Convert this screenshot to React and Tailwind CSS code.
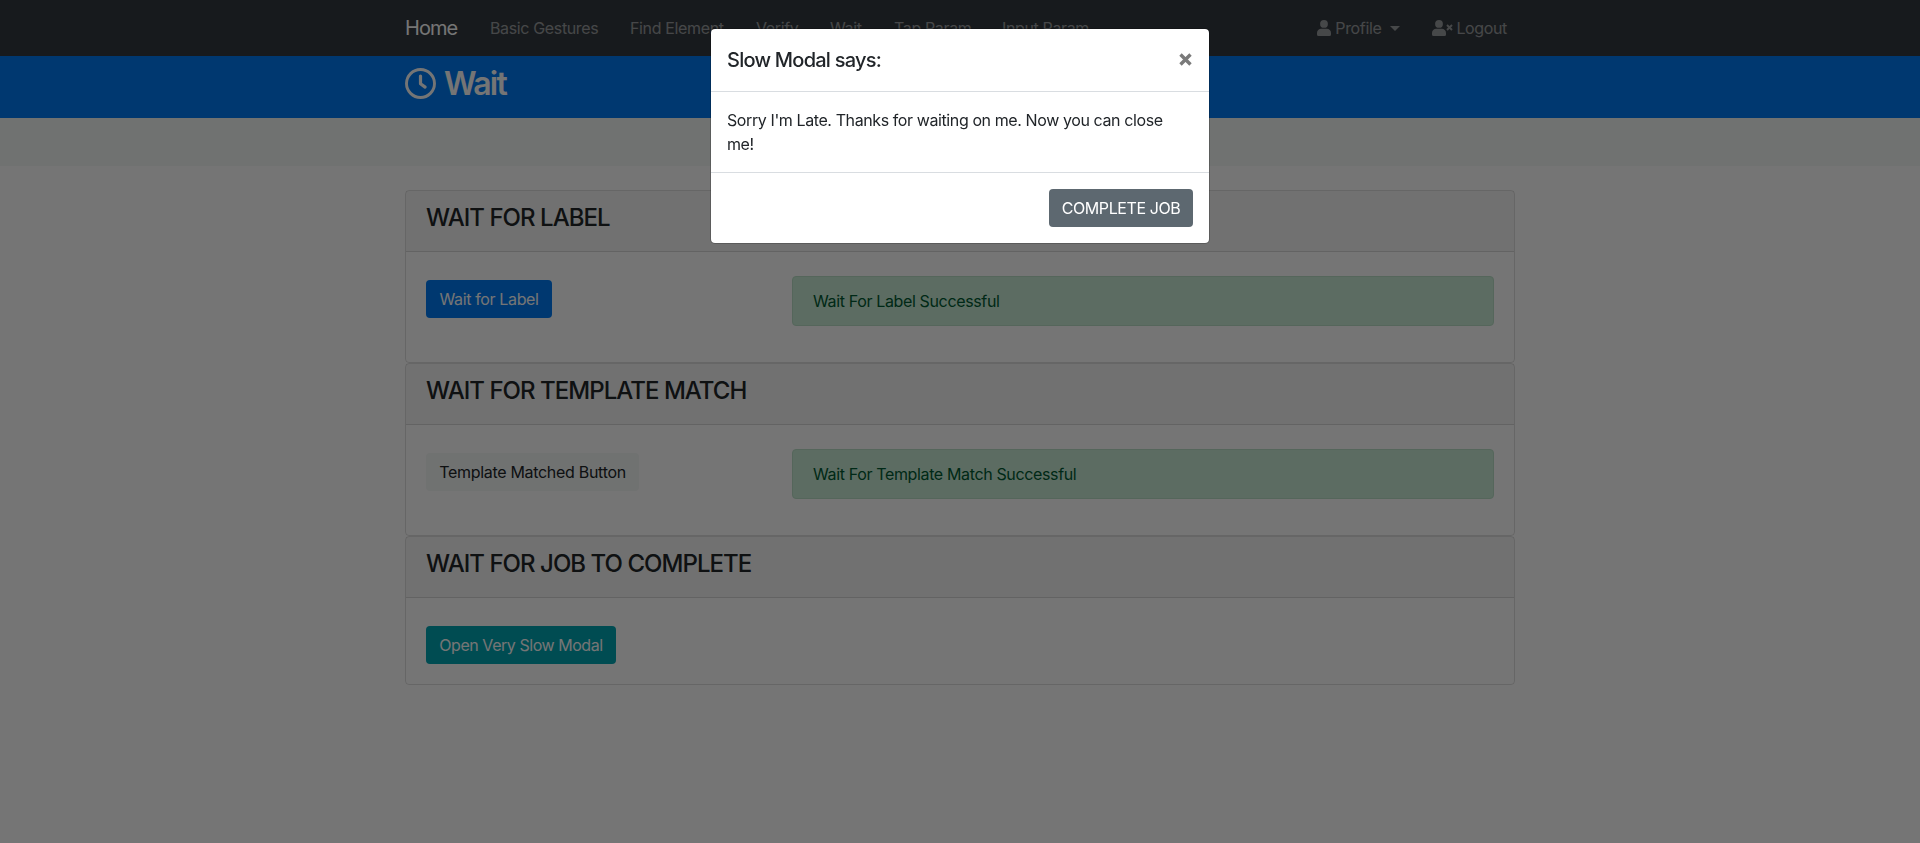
const navItems = [
  { label: "Basic Gestures", width: "w-[108px]" },
  { label: "Find Element", width: "w-[94px]" },
  { label: "Verify", width: "w-[42px]" },
  { label: "Wait", width: "w-[32px]" },
  { label: "Tap Param", width: "w-[76px]" },
  { label: "Input Param", width: "w-[88px]" },
];

function UserShape() {
  return (
    <>
      <circle cx="7" cy="3.9" r="3.9" fill="currentColor" />
      <path
        d="M4.2 8.8h5.6A4.2 4.2 0 0 1 14 13v1.5a1.5 1.5 0 0 1-1.5 1.5H1.5A1.5 1.5 0 0 1 0 14.5V13A4.2 4.2 0 0 1 4.2 8.8z"
        fill="currentColor"
      />
    </>
  );
}

function UserIcon() {
  return (
    <svg viewBox="0 0 14 16" className="mr-1 h-4 w-3.5">
      <UserShape />
    </svg>
  );
}

function UserTimesIcon() {
  return (
    <svg viewBox="0 0 21 16" className="mr-[3px] ml-8 h-4 w-[21px]">
      <UserShape />
      <path d="M15 5l5 5M20 5l-5 5" stroke="currentColor" strokeWidth="1.9" />
    </svg>
  );
}

function ClockIcon() {
  return (
    <svg viewBox="0 0 31 31" className="-mt-px size-[31px]" fill="none" stroke="currentColor">
      <circle cx="15.5" cy="15.5" r="14" strokeWidth="2.9" />
      <path d="M15.5 8v7.7l4.6 3.4" strokeWidth="3.2" strokeLinecap="round" strokeLinejoin="round" />
    </svg>
  );
}

function Navbar() {
  return (
    <nav className="h-14 bg-[#343a40]">
      <div className="mx-auto flex h-full w-[1110px] items-center text-white/50">
        <span className="w-[53px] text-[20px] tracking-[-0.95px] text-white">Home</span>
        <div className="ml-8 flex gap-8">
          {navItems.map((item) => (
            <span key={item.label} className={item.width}>{item.label}</span>
          ))}
        </div>
        <div className="ml-auto flex items-center pr-2">
          <UserIcon />
          <span>Profile</span>
          <span className="ml-[9px] border-x-[5px] border-t-[5px] border-x-transparent border-t-current" />
          <UserTimesIcon />
          <span>Logout</span>
        </div>
      </div>
    </nav>
  );
}

function Card({ title, bodyHeight, children }) {
  return (
    <section className={`${bodyHeight} rounded border border-black/[.125]`}>
      <header className="h-[61px] border-b border-black/[.125] bg-black/[.03] px-5 pt-[13px]">
        <h3 className="text-2xl leading-[28.8px] font-medium tracking-[-0.96px] text-[#212529]">{title}</h3>
      </header>
      <div className="flex items-start px-5 pt-6">{children}</div>
    </section>
  );
}

function Button({ className, children }) {
  return (
    <button className={`flex h-[38px] items-center justify-center rounded whitespace-nowrap ${className}`}>
      {children}
    </button>
  );
}

function Alert({ children }) {
  return (
    <div className="ml-auto h-[50px] w-[702px] rounded border border-[#b9dfc6] bg-[#c8ebd5] px-5 py-3 text-[#005a32]">
      {children}
    </div>
  );
}

function Modal() {
  return (
    <div className="fixed inset-0 bg-black/[.54]">
      <div role="dialog" className="mx-auto mt-7 w-[500px] rounded-[5px] border border-black/20 bg-white bg-clip-padding text-[#212529]">
        <div className="flex h-[63px] items-start justify-between border-b border-[#d9dde1] p-4">
          <h5 className="text-[20px] leading-[30px] font-medium tracking-[-0.76px]">Slow Modal says:</h5>
          <button aria-label="Close" className="mt-2 mr-[1.5px]">
            <svg viewBox="0 0 13 13" className="size-[13px] stroke-[#7a7a7a]" strokeWidth="3.4">
              <path d="M1.5 1.5 11.5 11.5M11.5 1.5 1.5 11.5" />
            </svg>
          </button>
        </div>
        <p className="py-4 pr-6 pl-4 tracking-[-0.4px]">Sorry I'm Late. Thanks for waiting on me. Now you can close me!</p>
        <div className="flex justify-end border-t border-[#d9dde1] p-4">
          <Button className="w-[144px] bg-[#5d6870] tracking-[-0.42px] text-white">COMPLETE JOB</Button>
        </div>
      </div>
    </div>
  );
}

export default function App() {
  return (
    <div className="h-[843px] overflow-hidden bg-white font-[Inter,'Liberation_Sans',sans-serif] text-base leading-6 tracking-[-0.36px] whitespace-nowrap [&_p]:whitespace-normal">
      <Navbar />
      <div className="h-[62px] bg-[#007bf5]">
        <h2 className="mx-auto flex w-[1110px] items-center gap-2 pt-[9px] text-[32px] leading-[38.4px] font-semibold tracking-[-1.7px] text-white">
          <ClockIcon />
          Wait
        </h2>
      </div>
      <div className="h-12 bg-[#f4f8f7]" />
      <main className="mx-auto mt-6 w-[1110px]">
        <Card title="WAIT FOR LABEL" bodyHeight="h-[173px]">
          <Button className="mt-1 w-[126px] bg-[#007bf5] text-white">Wait for Label</Button>
          <Alert>Wait For Label Successful</Alert>
        </Card>
        <Card title="WAIT FOR TEMPLATE MATCH" bodyHeight="h-[173px]">
          <Button className="mt-1 w-[213px] bg-[#f4f8f7] tracking-[-0.3px] text-[#212529]">Template Matched Button</Button>
          <Alert>Wait For Template Match Successful</Alert>
        </Card>
        <Card title="WAIT FOR JOB TO COMPLETE" bodyHeight="h-[149px]">
          <Button className="mt-1 w-[190px] bg-[#00a5b4] tracking-[-0.45px] text-white">Open Very Slow Modal</Button>
        </Card>
      </main>
      <Modal />
    </div>
  );
}
